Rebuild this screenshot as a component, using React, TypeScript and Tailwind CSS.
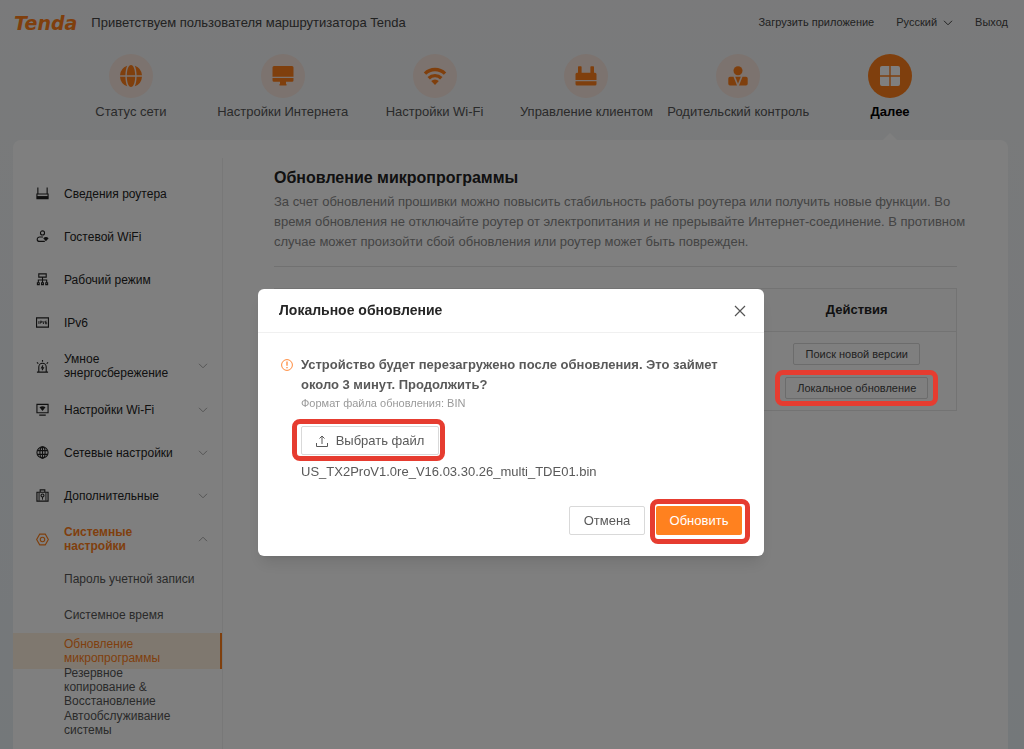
import { ReactNode } from "react"
import { clsx } from "clsx"

type IconProps = { className?: string }

/* ---------- top menu icons ---------- */

const GlobeSolid = () => (
  <svg viewBox="0 0 24 24" className="w-6 h-6" fill="currentColor">
    <path d="M8.200 1.700A11 11 0 0 0 1 11.300h5.400c.1-3.800.7-7 1.800-9.600z" />
    <path d="M15.800 1.700A11 11 0 0 1 23 11.300h-5.400c-.1-3.800-.7-7-1.800-9.600z" />
    <path d="M8.200 22.300A11 11 0 0 1 1 12.700h5.400c.1 3.800.7 7 1.800 9.600z" />
    <path d="M15.800 22.300A11 11 0 0 0 23 12.700h-5.400c-.1 3.800-.7 7-1.800 9.600z" />
    <path d="M12 1c-2.600 0-4 4.500-4.200 10.300h8.400C16 5.500 14.600 1 12 1zM12 23c-2.600 0-4-4.500-4.200-10.300h8.400C16 18.500 14.600 23 12 23z" />
  </svg>
)

const MonitorSolid = () => (
  <svg viewBox="0 0 24 24" className="w-6 h-6" fill="currentColor">
    <path d="M3 2h18a1.500 1.500 0 0 1 1.500 1.500V12.700h-21V3.500A1.500 1.500 0 0 1 3 2z" />
    <path d="M1.500 14h21v2.200A1.500 1.500 0 0 1 21 17.700h-6V20h.5v1.500h-7V20H9v-2.300H3a1.500 1.500 0 0 1-1.500-1.500z" />
  </svg>
)

const WifiSolid = () => (
  <svg viewBox="0 0 24 24" className="w-6 h-6" fill="none" stroke="currentColor" strokeWidth="3.400">
    <path d="M2 9.600a14.200 14.200 0 0 1 20 0" />
    <path d="M5.700 14.200a9 9 0 0 1 12.600 0" />
    <path d="M12 21l-3.800-4a5.400 5.400 0 0 1 7.600 0z" fill="currentColor" stroke="none" />
  </svg>
)

const RouterSolid = () => (
  <svg viewBox="0 0 24 24" className="w-6 h-6" fill="currentColor">
    <path d="M4 3a.7.7 0 0 1 .7-.7h2.200a.7.7 0 0 1 .7.7v5.800h8.800V3a.7.7 0 0 1 .7-.7h2.200a.7.7 0 0 1 .7.7v5.800h1A1.500 1.500 0 0 1 22.500 10.300V16h-21v-5.700A1.500 1.500 0 0 1 3 8.800h1z" />
    <path d="M1.500 17.300h21v2.700a1.500 1.500 0 0 1-1.500 1.500H3A1.500 1.500 0 0 1 1.500 20z" />
  </svg>
)

const PersonSolid = () => (
  <svg viewBox="0 0 24 24" className="w-6 h-6" fill="currentColor">
    <circle cx="12" cy="6.800" r="4.500" />
    <path d="M4 12.800h3.500l3.500 8.700H4a1.700 1.700 0 0 1-1.700-1.700v-5.300A1.700 1.700 0 0 1 4 12.800zM20 12.800h-3.500L13 21.500h7a1.700 1.700 0 0 0 1.700-1.700v-5.300a1.700 1.700 0 0 0-1.700-1.700z" />
    <path d="M9.200 12.800h5.600L12 19.700z" />
  </svg>
)

const GridSolid = () => (
  <svg viewBox="0 0 24 24" className="w-6 h-6" fill="currentColor">
    <path d="M4 2h7.300v9.300H2V4a2 2 0 0 1 2-2zM12.700 2H20a2 2 0 0 1 2 2v7.300h-9.300zM2 12.700h9.300V22H4a2 2 0 0 1-2-2zM12.700 12.700H22V20a2 2 0 0 1-2 2h-7.300z" />
  </svg>
)

/* ---------- sidebar icons ---------- */

const LineIcon = ({ children }: { children: ReactNode }) => (
  <svg viewBox="0 0 14 14" className="w-[13px] h-[13px] shrink-0" fill="none" stroke="currentColor" strokeWidth="1.200">
    {children}
  </svg>
)

const RouterIcon = () => (
  <LineIcon>
    <path d="M2 .5v7M12 .5v7M1 7.500h12v5H1z" />
    <path d="M1 11h12" strokeWidth="2.500" />
  </LineIcon>
)

const GuestIcon = () => (
  <LineIcon>
    <circle cx="7" cy="3.200" r="2.200" />
    <path d="M7.500 7.600H4a2.600 2.600 0 0 0-2.700 2.500c0 1.500 1 2.200 2.700 2.200h5.500" />
    <path d="M7.800 9a4.200 4.200 0 0 1 5.800 0l-2.900 3z" fill="currentColor" stroke="none" />
  </LineIcon>
)

const ModeIcon = () => (
  <LineIcon>
    <path d="M3 1h8v3.500H3zM7 4.500v6M2.500 10.500v-3h9v3" />
    <path d="M1.500 10.500h2v2h-2zM6 10.500h2v2H6zM10.500 10.500h2v2h-2z" />
  </LineIcon>
)

const Ipv6Icon = () => (
  <LineIcon>
    <path d="M.6 2h12.800v10H.6z" />
    <path d="M3 5.500v3M4.500 8.500v-3H6V7H4.500M7.200 5.500L8 8.500l.8-3M11.500 5.500h-1.300v3h1.300V7h-1.300" strokeWidth="0.800" />
  </LineIcon>
)

const EnergyIcon = () => (
  <LineIcon>
    <path d="M1 13h12M3 13V7.500a4 4 0 0 1 8 0V13M7 0v2M1 2.500L2.500 4M13 2.500L11.500 4" />
    <path d="M7.500 5.800L6 8.500h2l-1.500 2.500" />
  </LineIcon>
)

const WifiScreenIcon = () => (
  <LineIcon>
    <path d="M1 1.500h12v9H1zM3.500 13h7" />
    <path d="M3.800 4.700a5 5 0 0 1 6.400 0L7 8.500z" fill="currentColor" stroke="none" />
  </LineIcon>
)

const GlobeIcon = () => (
  <LineIcon>
    <circle cx="7" cy="7" r="6" />
    <ellipse cx="7" cy="7" rx="2.800" ry="6" />
    <path d="M1.500 5h11M1.500 9h11M7 1v12" />
  </LineIcon>
)

const ToolboxIcon = () => (
  <LineIcon>
    <path d="M1 3.500h12V13H1zM4.500 3.500V1h5v2.500" />
    <circle cx="7" cy="7" r="1.600" />
    <path d="M7 8.500v3M3.300 4v8.500M10.700 4v8.500" strokeWidth="1" />
  </LineIcon>
)

const HexIcon = () => (
  <LineIcon>
    <path d="M4 1.200h6L13.300 7 10 12.800H4L.7 7z" />
    <circle cx="7" cy="7" r="2.400" />
  </LineIcon>
)

const Chevron = ({ className }: IconProps) => (
  <svg viewBox="0 0 10 6" className={clsx("h-1.5 w-2.5 shrink-0", className)} fill="none" stroke="currentColor">
    <path d="M1 .8l4 4 4-4" />
  </svg>
)

const topMenu = [
  { label: "Статус сети", icon: <GlobeSolid /> },
  { label: "Настройки Интернета", icon: <MonitorSolid /> },
  { label: "Настройки Wi-Fi", icon: <WifiSolid /> },
  { label: "Управление клиентом", icon: <RouterSolid /> },
  { label: "Родительский контроль", icon: <PersonSolid /> },
  { label: "Далее", icon: <GridSolid />, active: true },
]

const sideMenu = [
  { label: "Сведения роутера", icon: <RouterIcon /> },
  { label: "Гостевой WiFi", icon: <GuestIcon /> },
  { label: "Рабочий режим", icon: <ModeIcon /> },
  { label: "IPv6", icon: <Ipv6Icon /> },
  { label: "Умное энергосбережение", icon: <EnergyIcon />, expandable: true },
  { label: "Настройки Wi-Fi", icon: <WifiScreenIcon />, expandable: true },
  { label: "Сетевые настройки", icon: <GlobeIcon />, expandable: true },
  { label: "Дополнительные", icon: <ToolboxIcon />, expandable: true },
  { label: "Системные настройки", icon: <HexIcon />, expandable: true, active: true },
]

const subMenu = [
  { label: "Пароль учетной записи" },
  { label: "Системное время" },
  { label: "Обновление микропрограммы", active: true },
  // nbsp keeps the ampersand on the second line
  { label: "Резервное копирование\u00a0& Восстановление" },
  { label: "Автообслуживание системы" },
]

// red frame around a control, always above the dimmed page
const Highlight = ({ className }: IconProps) => (
  <span className={clsx("absolute z-50 rounded-lg border-[5px] border-[#e63c30] pointer-events-none", className)} />
)

function Header() {
  return (
    <header className="flex h-[45px] items-center justify-between pl-3.5 pr-4">
      <div className="flex items-center gap-3.5">
        <a href="#" className="font-['DejaVu_Sans',sans-serif] text-[19px] leading-5 font-bold italic text-[#ff7f1a]">
          Tenda
        </a>
        <span className="text-[13px] text-[#444]">Приветствуем пользователя маршрутизатора Tenda</span>
      </div>
      <div className="flex items-center gap-[22px] text-[11px] text-[#444]">
        <a href="#">Загрузить приложение</a>
        <button className="flex items-center gap-1.5">
          Русский <Chevron />
        </button>
        <a href="#">Выход</a>
      </div>
    </header>
  )
}

function TopMenu() {
  return (
    <nav className="grid grid-cols-6 pl-[55px] pr-[58px] pt-[9px]">
      {topMenu.map((item) => (
        <a
          key={item.label}
          href="#"
          className={clsx(
            "relative flex h-[86px] flex-col items-center whitespace-nowrap text-[13px] leading-4",
            item.active ? "font-bold text-black" : "text-[#555]"
          )}
        >
          <span
            className={clsx(
              "mb-1.5 flex h-11 w-11 items-center justify-center rounded-full",
              item.active ? "bg-[#ff7f1a] text-white" : "bg-[#f8e6de] text-[#ff7f1a]"
            )}
          >
            {item.icon}
          </span>
          {item.label}
          {item.active && (
            <svg viewBox="0 0 14 7" className="absolute bottom-0 h-[7px] w-3.5" fill="#fff">
              <path d="M7 0l7 7H0z" />
            </svg>
          )}
        </a>
      ))}
    </nav>
  )
}

function Sidebar() {
  return (
    <aside className="w-[210px] shrink-0 pt-[18px]">
      <div className="h-full border-r border-[#f0f0f0] pt-3.5 text-[12px] leading-[14px]">
        <ul>
          {sideMenu.map((item) => (
            <li key={item.label}>
              <a
                href="#"
                className={clsx(
                  "flex min-h-[43px] items-center py-2 pl-[23px] pr-3.5",
                  item.active ? "font-bold text-[#ff7f1a]" : "text-[#222]"
                )}
              >
                {item.icon}
                <span className="ml-[15px] w-[115px]">{item.label}</span>
                {item.expandable && <Chevron className={clsx("ml-auto text-[#aaa]", item.active && "rotate-180")} />}
              </a>
            </li>
          ))}
        </ul>
        <ul>
          {subMenu.map((item) => (
            <li key={item.label}>
              <a
                href="#"
                className={clsx(
                  "flex h-9 items-center pl-[51px] pr-6",
                  item.active ? "border-r-2 border-[#ff7f1a] bg-[#fff0de] text-[#ff7f1a]" : "text-[#555]"
                )}
              >
                {item.label}
              </a>
            </li>
          ))}
        </ul>
      </div>
    </aside>
  )
}

function Content() {
  const actionBtn = "block h-[22px] rounded-[2px] border border-[#d8d8d8] px-[11px] text-[11px] leading-5 text-[#444]"
  return (
    <section className="min-w-0 flex-1 pl-[51px] pr-[51px] pt-7">
      <h1 className="text-[16px] leading-5 font-bold text-[#222]">Обновление микропрограммы</h1>
      <p className="mt-1 whitespace-nowrap border-b border-[#e2e2e2] pb-3.5 text-[13px] leading-5 text-[#888]">
        За счет обновлений прошивки можно повысить стабильность работы роутера или получить новые функции. Во
        <br />
        время обновления не отключайте роутер от электропитания и не прерывайте Интернет-соединение. В противном
        <br />
        случае может произойти сбой обновления или роутер может быть поврежден.
      </p>
      <table className="mt-[21px] w-full border-collapse border border-[#e6e6e6]">
        <thead>
          <tr className="h-[43px] border-b border-[#e6e6e6] bg-[#fcfcfc]">
            <td />
            <th className="w-[199px] text-[13px] font-bold text-[#222]">Действия</th>
          </tr>
        </thead>
        <tbody>
          <tr>
            <td />
            <td className="py-[11px]">
              <div className="flex flex-col items-center gap-3">
                <button className={actionBtn}>Поиск новой версии</button>
                <div className="relative">
                  <button className={actionBtn}>Локальное обновление</button>
                  <Highlight className="-inset-x-[10px] -inset-y-[7px]" />
                </div>
              </div>
            </td>
          </tr>
        </tbody>
      </table>
    </section>
  )
}

function UpdateDialog() {
  return (
    <div className="fixed inset-0 z-40 flex items-start justify-center bg-black/50 pr-0.5 pt-[289px]">
      <div role="dialog" aria-labelledby="dialog-title" className="w-[506px] rounded-md bg-white shadow-lg">
        <div className="flex h-11 items-center justify-between border-b border-[#f0f0f0] pl-[21px] pr-[18px]">
          <h2 id="dialog-title" className="text-[14px] font-bold text-[#262626]">
            Локальное обновление
          </h2>
          <button aria-label="Закрыть" className="text-[#555]">
            <svg viewBox="0 0 12 12" className="h-3 w-3" fill="none" stroke="currentColor" strokeWidth="1.200">
              <path d="M1 1l10 10M11 1L1 11" />
            </svg>
          </button>
        </div>

        <div className="flex gap-2 px-[23px] pt-[22px] text-[13px] leading-5 text-[#595959]">
          <svg viewBox="0 0 12 12" className="mt-1 h-3 w-3 shrink-0" fill="none" stroke="#ff8a3c">
            <circle cx="6" cy="6" r="5.400" />
            <path d="M6 2.500v4.300M6 8v1.300" strokeWidth="1.300" />
          </svg>
          <div>
            <p className="font-bold">Устройство будет перезагружено после обновления. Это займет около 3 минут. Продолжить?</p>
            <p className="text-[11px] leading-4 text-[#999]">Формат файла обновления: BIN</p>
            <div className="relative mt-[15px] w-fit">
              <button className="flex h-[29px] w-[138px] items-center justify-center gap-2 rounded-[2px] border border-[#d9d9d9]">
                <svg viewBox="0 0 12 12" className="h-3 w-3" fill="none" stroke="currentColor">
                  <path d="M.5 8v3.500h11V8M6 9V1M3.500 3.500L6 1l2.500 2.500" />
                </svg>
                Выбрать файл
              </button>
              <Highlight className="-left-[9px] -right-1.5 -top-[7px] -bottom-1.5" />
            </div>
            <p className="mt-[7px]">US_TX2ProV1.0re_V16.03.30.26_multi_TDE01.bin</p>
          </div>
        </div>

        <div className="flex justify-end gap-[11px] pb-[21px] pl-6 pr-[22px] pt-6 text-[13px]">
          <button className="h-[29px] w-[76px] rounded-[2px] border border-[#d9d9d9] text-[#595959]">Отмена</button>
          <div className="relative">
            <button className="block h-[29px] w-[86px] rounded-[2px] bg-[#ff811f] text-white">Обновить</button>
            <Highlight className="-left-1.5 -right-2 -top-[7px] -bottom-[9px]" />
          </div>
        </div>
      </div>
    </div>
  )
}

export default function App() {
  return (
    <div className="flex min-h-screen flex-col bg-linear-to-b from-[#f4f5f6] to-[#e9f0f5] font-['Liberation_Sans',Arial,sans-serif]">
      <Header />
      <TopMenu />
      <main className="ml-[13px] mr-4 flex flex-1 rounded-t-lg bg-white">
        <Sidebar />
        <Content />
      </main>
      <UpdateDialog />
    </div>
  )
}
